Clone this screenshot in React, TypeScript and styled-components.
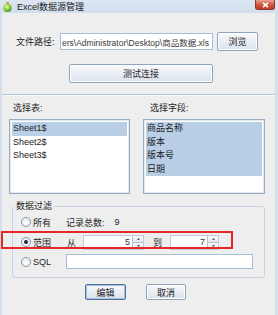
import React from "react";
import styled, { createGlobalStyle } from "styled-components";

const GlobalStyle = createGlobalStyle`
  html, body { margin: 0; padding: 0; background: #ffffff; }
  body {
    font-family: "Liberation Sans", "Noto Sans CJK SC", sans-serif;
    font-size: 9px;
    color: #1f1f1f;
  }
`;

const Window = styled.div`
  position: relative;
  width: 278px;
  height: 315px;
  overflow: hidden;
  display: flex;
  flex-direction: column;
  background: #d4e0ee;
`;

const TitleBar = styled.div`
  height: 13px;
  display: flex;
  align-items: center;
  padding-left: 3px;
  background: linear-gradient(#dde7f3, #d2deec);
`;

const TitleText = styled.span`
  margin-left: 5px;
  font-size: 9px;
  color: #1b1b1b;
`;

const CloseButton = styled.div`
  align-self: flex-start;
  margin-left: auto;
  margin-right: 3px;
  width: 20px;
  height: 10px;
  display: flex;
  align-items: center;
  justify-content: center;
  box-sizing: border-box;
  border: 1px solid #8a3a2c;
  border-top: none;
  border-radius: 0 0 3px 3px;
  background: linear-gradient(#eaa394, #d0513c 55%, #c23d28);
`;

const Client = styled.div`
  flex: 1;
  margin: 0 3px 0 2px;
  background: #eeeeee;
  display: flex;
  flex-direction: column;
`;

const PathRow = styled.div`
  display: flex;
  align-items: center;
  margin-top: 19px;
  padding-left: 14px;
`;

const FieldLabel = styled.span`
  width: 44px;
  flex-shrink: 0;
`;

const TextField = styled.div<{ $width: number; $height?: number }>`
  width: ${({ $width }) => $width}px;
  height: ${({ $height }) => $height ?? 17}px;
  box-sizing: border-box;
  border: 1px solid #a8bdd7;
  background: #ffffff;
  padding: 0 1px;
  display: flex;
  align-items: center;
  overflow: hidden;
  white-space: nowrap;
  font-size: 8.5px;
  color: #3a3a3a;
`;

const Button = styled.div<{ $width: number; $height?: number; $default?: boolean }>`
  width: ${({ $width }) => $width}px;
  height: ${({ $height }) => $height ?? 19}px;
  box-sizing: border-box;
  display: flex;
  align-items: center;
  justify-content: center;
  border: 1px solid ${({ $default }) => ($default ? "#55708f" : "#8fa3bb")};
  border-radius: 2px;
  background: linear-gradient(#f8fafc, #e9eef4 50%, #d9e2ec);
  box-shadow: ${({ $default }) =>
    $default ? "inset 0 0 0 1px #9fc3e4" : "inset 0 0 0 1px #ffffff"};
  color: #1b1b1b;
`;

const TestRow = styled.div`
  margin-top: 13px;
  padding-left: 67px;
`;

const Separator = styled.div`
  margin-top: 11px;
  height: 1px;
  background: #aec3dd;
  border-bottom: 1px solid #f7f9fc;
`;

const Columns = styled.div`
  display: flex;
  gap: 13px;
  margin-top: 6px;
  padding-left: 7px;
`;

const Column = styled.div`
  display: flex;
  flex-direction: column;
`;

const ColumnLabel = styled.div<{ $indent: number }>`
  height: 13px;
  line-height: 13px;
  padding-left: ${({ $indent }) => $indent}px;
  margin-bottom: 4px;
`;

const ListBox = styled.div<{ $width: number }>`
  width: ${({ $width }) => $width}px;
  height: 75px;
  box-sizing: border-box;
  border: 1px solid #9aabbf;
  box-shadow: inset 0 0 0 1px #e3e9f0;
  background: #ffffff;
  padding: 2px 2px;
`;

const ListItem = styled.div<{ $selected?: boolean }>`
  height: 13.5px;
  line-height: 13.5px;
  padding-left: 1px;
  background: ${({ $selected }) => ($selected ? "#b9cfe6" : "transparent")};
  color: #222;
`;

const GroupBox = styled.fieldset`
  margin: 6px 10px 0 10px;
  padding: 0;
  border: 1px solid #c6d3e2;
  border-radius: 3px;
`;

const Legend = styled.legend`
  margin-left: 1px;
  padding: 0 2px;
  height: 12px;
  line-height: 12px;
`;

const GroupBody = styled.div`
  display: flex;
  flex-direction: column;
  padding: 0 0 6px 8px;
`;

const FilterRow = styled.div<{ $height?: number }>`
  height: ${({ $height }) => $height ?? 20}px;
  display: flex;
  align-items: center;
`;

const Radio = styled.span<{ $checked?: boolean }>`
  width: 10px;
  height: 10px;
  box-sizing: border-box;
  border-radius: 50%;
  border: 1px solid #8596ab;
  background: radial-gradient(circle at 50% 60%, #ffffff, #dde4ec);
  display: flex;
  align-items: center;
  justify-content: center;
  flex-shrink: 0;

  &::after {
    content: "";
    display: ${({ $checked }) => ($checked ? "block" : "none")};
    width: 4px;
    height: 4px;
    border-radius: 50%;
    background: #1e2a36;
  }
`;

const RadioText = styled.span`
  width: 33px;
  margin-left: 2px;
  flex-shrink: 0;
`;

const Caption = styled.span<{ $width?: number; $gap?: number }>`
  width: ${({ $width }) => ($width ? `${$width}px` : "auto")};
  margin-left: ${({ $gap }) => $gap ?? 0}px;
  flex-shrink: 0;
`;

const Spinner = styled.div<{ $width: number }>`
  width: ${({ $width }) => $width}px;
  height: 15px;
  display: flex;
  box-sizing: border-box;
  border: 1px solid #c3ccd6;
  background: #ffffff;
`;

const SpinValue = styled.div`
  flex: 1;
  display: flex;
  align-items: center;
  justify-content: flex-end;
  padding-right: 2px;
  color: #333;
`;

const SpinButtons = styled.div`
  width: 10px;
  display: flex;
  flex-direction: column;
  border-left: 1px solid #b8c3cf;
`;

const SpinArrow = styled.div`
  flex: 1;
  display: flex;
  align-items: center;
  justify-content: center;
  background: linear-gradient(#f7f8fa, #e3e7ec);
  & + & {
    border-top: 1px solid #b8c3cf;
  }
`;

const ButtonRow = styled.div`
  display: flex;
  gap: 20px;
  margin-top: 6px;
  padding-left: 83px;
`;

const Annotation = styled.div`
  position: absolute;
  left: 1px;
  top: 231px;
  width: 232px;
  height: 18px;
  box-sizing: border-box;
  border: 2px solid #e8262a;
  pointer-events: none;
`;

function AppIcon() {
  return (
    <svg width="9" height="10" viewBox="0 0 9 10">
      <defs>
        <radialGradient id="gem" cx="40%" cy="35%" r="70%">
          <stop offset="0" stopColor="#f4f9a8" />
          <stop offset="0.5" stopColor="#8fd23e" />
          <stop offset="1" stopColor="#3d8d1a" />
        </radialGradient>
      </defs>
      <rect x="3" y="0" width="3" height="2" fill="#c9a23a" />
      <circle cx="4.5" cy="6" r="4" fill="url(#gem)" />
    </svg>
  );
}

function SpinBox({ value, width }: { value: string; width: number }) {
  return (
    <Spinner $width={width}>
      <SpinValue>{value}</SpinValue>
      <SpinButtons>
        <SpinArrow>
          <svg width="3" height="2" viewBox="0 0 3 2">
            <path d="M0 2 L1.5 0 L3 2 Z" fill="#555" />
          </svg>
        </SpinArrow>
        <SpinArrow>
          <svg width="3" height="2" viewBox="0 0 3 2">
            <path d="M0 0 L1.5 2 L3 0 Z" fill="#555" />
          </svg>
        </SpinArrow>
      </SpinButtons>
    </Spinner>
  );
}

const sheets = ["Sheet1$", "Sheet2$", "Sheet3$"];
const fields = ["商品名称", "版本", "版本号", "日期"];

export default function App() {
  return (
    <>
      <GlobalStyle />
      <Window>
        <TitleBar>
          <AppIcon />
          <TitleText>Excel数据源管理</TitleText>
          <CloseButton>
            <svg width="7" height="6" viewBox="0 0 7 6">
              <path d="M1 0.8 L6 5.2 M6 0.8 L1 5.2" stroke="#ffffff" strokeWidth="1.6" />
            </svg>
          </CloseButton>
        </TitleBar>
        <Client>
          <PathRow>
            <FieldLabel>文件路径:</FieldLabel>
            <TextField $width={153}>ers\Administrator\Desktop\商品数据.xls</TextField>
            <Button $width={41} style={{ marginLeft: 4 }}>
              浏览
            </Button>
          </PathRow>
          <TestRow>
            <Button $width={144}>测试连接</Button>
          </TestRow>
          <Separator />
          <Columns>
            <Column>
              <ColumnLabel $indent={4}>选择表:</ColumnLabel>
              <ListBox $width={121}>
                {sheets.map((s, i) => (
                  <ListItem key={s} $selected={i === 0}>
                    {s}
                  </ListItem>
                ))}
              </ListBox>
            </Column>
            <Column>
              <ColumnLabel $indent={7}>选择字段:</ColumnLabel>
              <ListBox $width={122}>
                {fields.map((f) => (
                  <ListItem key={f} $selected>
                    {f}
                  </ListItem>
                ))}
              </ListBox>
            </Column>
          </Columns>
          <GroupBox>
            <Legend>数据过滤</Legend>
            <GroupBody>
              <FilterRow>
                <Radio />
                <RadioText>所有</RadioText>
                <Caption>记录总数:</Caption>
                <Caption $gap={10}>9</Caption>
              </FilterRow>
              <FilterRow>
                <Radio $checked />
                <RadioText>范围</RadioText>
                <Caption $width={16} $gap={1}>从</Caption>
                <SpinBox value="5" width={61} />
                <Caption $width={17} $gap={9}>到</Caption>
                <SpinBox value="7" width={49} />
              </FilterRow>
              <FilterRow $height={19}>
                <Radio />
                <RadioText>SQL</RadioText>
                <TextField $width={187} $height={15} />
              </FilterRow>
            </GroupBody>
          </GroupBox>
          <ButtonRow>
            <Button $width={41} $height={16} $default>
              编辑
            </Button>
            <Button $width={40} $height={16}>
              取消
            </Button>
          </ButtonRow>
        </Client>
        <Annotation />
      </Window>
    </>
  );
}
